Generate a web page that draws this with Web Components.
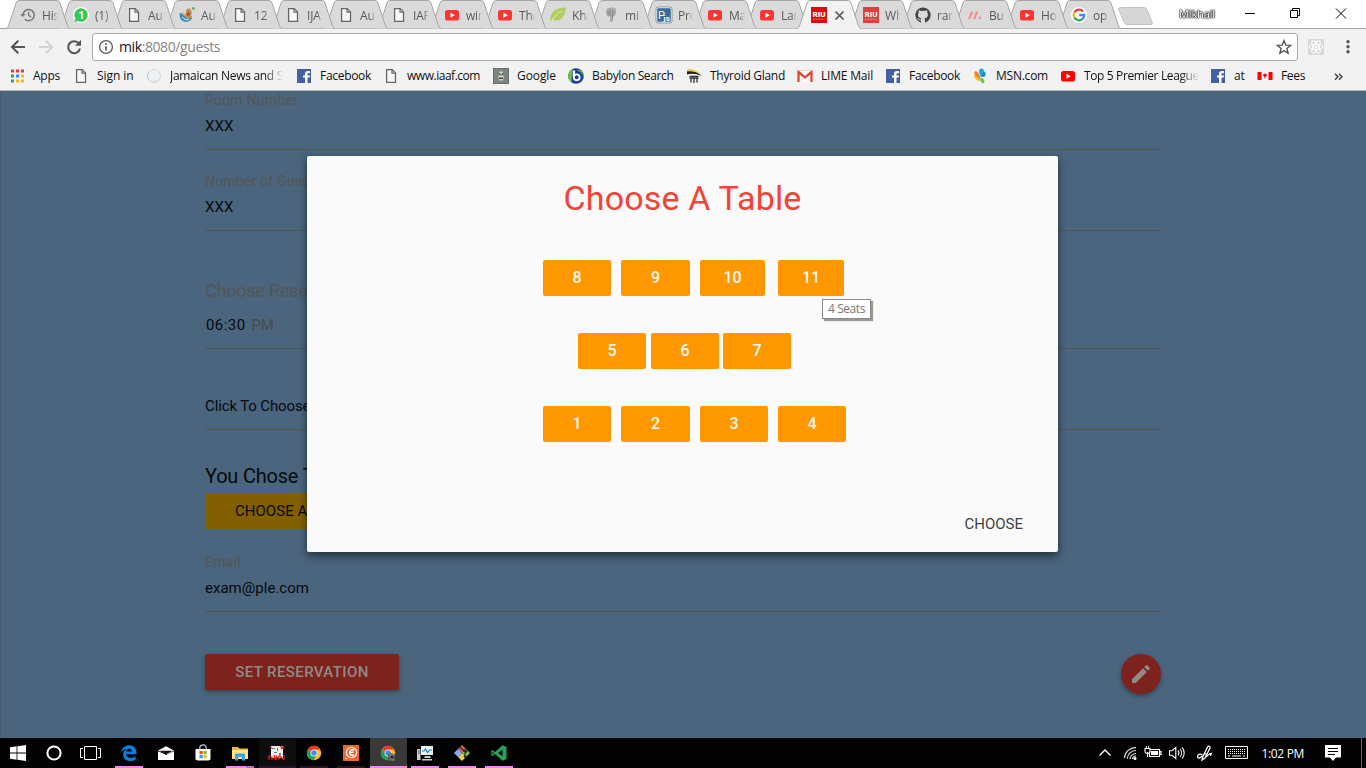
<!DOCTYPE html>
<html lang="en">
<head>
<meta charset="utf-8">
<title>Guests</title>
<style>
html,body{margin:0;height:768px;overflow:hidden;background:#000}
body{font-family:"Open Sans","Noto Sans",sans-serif}
</style>
</head>
<body>
<desktop-screen></desktop-screen>
<script>
const DOC='<path d="M3.6 1.6h5.6l3.3 3.3v9.5H3.6z" fill="#f8f8f8" stroke="#666" stroke-width="1.3"/><path d="M9 1.8v3.4h3.4" fill="none" stroke="#666" stroke-width="1.2"/>';
const YT=c=>`<rect x="1" y="3" width="14" height="10.6" rx="2.6" fill="${c}"/><path d="M6.5 5.8v5l4.2-2.5z" fill="#fff"/>`;
const FB='<rect x="1" y="1" width="14" height="14" fill="#4460a0"/><path d="M9 15V9.6H7V7.4h2V6c0-2 1-3 2.9-3H14v2.2h-1.4c-.9 0-1.1.4-1.1 1.1v1.1H14l-.3 2.2h-2.2V15z" fill="#fff"/>';
const RIU=o=>`<g opacity="${o}"><rect width="16" height="16" fill="#e00a0a"/><text x="1.6" y="9.6" font-family="Roboto" font-weight="900" font-size="7.4" textLength="13" lengthAdjust="spacingAndGlyphs" fill="#fff">RIU</text><path d="M2 12.2h12" stroke="#f59a9a" stroke-width=".8" stroke-dasharray="1 .5"/></g>`;
const CHROME='<circle cx="8" cy="8" r="7.2" fill="#fbc116"/><path d="M8 8 1.8 4.4A7.2 7.2 0 0 1 14.3 4.6L8 4.7z" fill="#e33b2e"/><path d="M8 8 1.8 4.4A7.2 7.2 0 0 0 7.6 15.2L10.8 9.6z" fill="#1da35a"/><circle cx="8" cy="8" r="3.5" fill="#f5f5f5"/><circle cx="8" cy="8" r="2.7" fill="#4488ee"/>';
const ICONS={
 history:'<path d="M3 8a5.6 5.6 0 1 1 1.8 4.2" fill="none" stroke="#777" stroke-width="1.5"/><path d="M.3 7h5.2L2.9 10z" fill="#777"/><path d="M8.6 4.8v3.6l2.6 1.6" fill="none" stroke="#777" stroke-width="1.3"/>',
 whats:'<circle cx="8" cy="8" r="8" fill="#fff"/><path d="M8 1.2a6.8 6.8 0 1 1-3 12.9L1.5 15l1-3.3A6.8 6.8 0 0 1 8 1.2z" fill="#34c759"/><text x="5.4" y="12" font-family="Roboto" font-weight="700" font-size="10.5" fill="#fff">1</text>',
 doc:DOC,
 play:'<path d="M7 4c1-3 4-3 5-1l1 3-1 2 1 2c-1 3-5 5-8 5 2-1 3-2 3-4L5 9c1-1 2-3 2-5z" fill="#c98a50"/><path d="M.5 6c3 0 4 2 6 4s4 2 7 0c-1 4-5 5.500-8.500 4.500S.5 10 .5 6z" fill="#3b8fb8"/><path d="M2 6l3-1 1 4z" fill="#e9b23c"/><path d="M9 4l2 4-3 1z" fill="#7a5038"/><path d="M3 10l4 3 3-1" fill="none" stroke="#d9e6ea"/><circle cx="14.4" cy="1.500" r="1.400" fill="#45bd67"/>',
 yt:YT('#ff3434'), ytr:YT('#ff0000'),
 leaf:'<path d="M.5 15C-1 5 5 1 16 .5 15.500 11 8 16 3 12.500z" fill="#b2cc60"/><path d="M1 15.500C4 9 8 6 12 4" fill="none" stroke="#e3ecc6" stroke-width="1"/>',
 pg:'<path d="M4 1.500c3-1.500 6-1.500 8.500 0 1.500 2 .5 6-1 7.500L10 9v5c-1 1.500-3 1.500-3-.5V9L5 10C3 7 2.500 4 4 1.500z" fill="#aaa"/><path d="M7 3v6M9.800 3v8M5 4v4" stroke="#777" stroke-width=".8" fill="none"/>',
 pjs:'<rect x=".7" y=".7" width="14.600" height="14.600" rx="1.800" fill="#396b94" stroke="#fff"/><rect width="16" height="16" rx="2" fill="none" stroke="#234" stroke-width=".4"/><text x="2" y="11.500" font-family="Roboto" font-size="11" fill="#fff">P</text><text x="7.600" y="14" font-family="Roboto" font-weight="700" font-size="8" fill="#fff">js</text>',
 riu:RIU(1), riuf:RIU(.75),
 github:'<path d="M8 .4a7.700 7.700 0 0 0-2.500 15c.4.1.5-.2.5-.4v-1.600c-2.100.5-2.600-.9-2.600-.9-.4-.9-.9-1.100-.9-1.100-.7-.5.1-.5.1-.5.8.1 1.200.8 1.200.8.7 1.200 1.800.9 2.200.7.100-.5.300-.9.500-1.100-1.700-.2-3.500-.9-3.500-3.800 0-.8.300-1.500.8-2.100-.1-.2-.4-1 .1-2.100 0 0 .6-.2 2.100.8a7 7 0 0 1 4 0c1.400-1 2.100-.8 2.100-.8.400 1.100.1 1.900 0 2.100.5.600.8 1.300.8 2.100 0 3-1.800 3.600-3.500 3.800.3.200.6.700.6 1.400v2.300c0 .2.100.5.500.4A7.700 7.700 0 0 0 8 .4z" fill="#444"/>',
 moqups:'<path d="M1 12 4 4.500h2.400L3.400 12zM6 12l3-7.500h2.400L8.500 12z" fill="#f68d90"/><circle cx="12.800" cy="10.800" r="1.400" fill="#f68d90"/>',
 google:'<circle cx="8" cy="8" r="8" fill="#fff"/><g fill="none" stroke-width="2.300"><path d="M12 4.400A5.300 5.300 0 0 0 3.400 5.400" stroke="#ea4335"/><path d="M3.400 5.400a5.300 5.300 0 0 0 0 5.200" stroke="#fbbc05"/><path d="M3.400 10.600a5.300 5.300 0 0 0 8 1.500" stroke="#34a853"/><path d="M11.400 12.100A5.300 5.300 0 0 0 13.200 8H8.200" stroke="#4285f4"/></g>',
 back:'<path d="M15 8H2.200M8.300 1.800 2 8l6.300 6.200" fill="none" stroke="#555" stroke-width="2"/>',
 fwd:'<path d="M1 8h12.800M7.700 1.800 14 8l-6.300 6.200" fill="none" stroke="#d2d2d2" stroke-width="2"/>',
 reload:'<path d="M13 4.600A6 6 0 1 0 14 9.500" fill="none" stroke="#555" stroke-width="2"/><path d="M15 .8v6H9z" fill="#555"/>',
 info:'<circle cx="8" cy="8" r="6.400" fill="none" stroke="#5a5a5a" stroke-width="1.300"/><path d="M8 7.200v4.400M8 4.200v1.700" stroke="#5a5a5a" stroke-width="1.700"/>',
 star:'<path d="m8 1.600 1.800 4.500 4.800.3-3.700 3.100 1.200 4.800L8 11.700l-4.100 2.600 1.200-4.800L1.400 6.400l4.800-.3z" fill="none" stroke="#555" stroke-width="1.400"/>',
 react:'<rect width="16" height="16" fill="#d8d8d8"/><g fill="none" stroke="#fff" stroke-width="1"><ellipse cx="8" cy="8" rx="6.800" ry="2.600"/><ellipse cx="8" cy="8" rx="6.800" ry="2.600" transform="rotate(60 8 8)"/><ellipse cx="8" cy="8" rx="6.800" ry="2.600" transform="rotate(120 8 8)"/></g><circle cx="8" cy="8" r="1.300" fill="#fff"/>',
 dots:'<circle cx="8" cy="2.700" r="1.700" fill="#555"/><circle cx="8" cy="7.700" r="1.700" fill="#555"/><circle cx="8" cy="12.700" r="1.700" fill="#555"/>',
 apps:'<g><path d="M2 1.500h3v3H2zM7 1.500h3v3H7zM12 1.500h3v3h-3z" fill="#e83b30"/><path d="M2 6.500h3v3H2z" fill="#2fa757"/><path d="M7 6.500h3v3H7z" fill="#2d8cf5"/><path d="M12 6.500h3v3h-3zM7 11.500h3v3H7zM12 11.500h3v3h-3z" fill="#fbb612"/><path d="M2 11.500h3v3H2z" fill="#2fa757"/></g>',
 globe:'<circle cx="8" cy="8" r="6.500" fill="#f0f1f3" stroke="#d5dae0" stroke-width="1"/><path d="M3 4a6 6 0 0 0 0 8" fill="none" stroke="#b7d4ea" stroke-width="1.300"/><path d="M5 12.500a6 6 0 0 0 7 0" fill="none" stroke="#e4ddc8"/>',
 fb:FB,
 robot:'<rect width="16" height="16" fill="#697069"/><rect x="1" y="1" width="14" height="14" fill="#7d837d"/><path d="M6 3.500h4v2.500H6zM5 7.500h6l-1 5H6z" fill="#c9d2bd"/><path d="M6 5h1.300v1H6zM9 5h1.300v1H9zM6 9.500h4v1.500H6z" fill="#444c44"/>',
 babylon:'<circle cx="8" cy="8" r="7.800" fill="#1d3ba5"/><path d="M1 5A7.800 7.800 0 0 0 4 14.800C3 10 4 6 5 .8A8 8 0 0 0 1 5z" fill="#6cc72e"/><path d="M12.500 1.800a8 8 0 0 1 2 10.500C16 7 14 4 8 2z" fill="#57b62a"/><path d="M6 2.500 5.800 9" stroke="#fff" stroke-width="2.300"/><circle cx="8.700" cy="9.300" r="2.900" fill="#1d3ba5" stroke="#fff" stroke-width="1.900"/>',
 thyroid:'<path d="M1 3C6 1.500 12 3.500 15.500 8 11 6 6 5 1 6.500z" fill="#222"/><path d="M1 1.500c5-1.800 10 .5 14 5C10 3.500 6 3 1 3.300z" fill="#f3cd45"/><path d="M3.500 8.300h9M5 10v4.500M8 10v5M11 10v4.500M3.500 10h9" stroke="#333" stroke-width="1.300"/>',
 gmail:'<path d="M.5 2.500h15v11.500H.5z" fill="#fff"/><path d="M1.500 14V4L8 9.500 14.500 4v10" fill="none" stroke="#e0453a" stroke-width="2.300"/><path d="M3 13.500 6.500 9M13 13.500 9.500 9M.5 2.500h15" stroke="#dcc" stroke-width=".8"/>',
 msn:'<path d="M9 9C6 4 6.500.5 9.500.5S13.500 5 10 9z" fill="#22a7e8"/><path d="M9.500 8.500c1-5 4-6 4-3s-1 4-4 3z" fill="#0f8fd0"/><path d="M8.500 12C3 9 1 5 3 3.500S8 7 9 12z" fill="#f58220"/><path d="M8 11.500C9 9 12 10 12.500 13.500 12 17 9 15 8 11.500z" fill="#7cc242"/><path d="M2 8c2-1 4 1 6 5-2 .5-4.500-1-6-5z" fill="#fdb913"/>',
 canada:'<path d="M.5 4h15v8H.5z" fill="#fff"/><path d="M.5 4h4v8h-4zM11.500 4h4v8h-4zM8 4.800l.8 1.500 1.500.2-.8 1.700-1 .7v1.700h-1V8.900l-1-.7-.8-1.700 1.500-.2z" fill="#f00"/>',
 win:'<path d="M0 2.300 6.600 1.300v6.300H0zM7.400 1.200 16 0v7.600H7.400zM0 8.400h6.600v6.300L0 13.700zM7.400 8.400H16V16l-8.600-1.200z" fill="#fff"/>',
 cortana:'<circle cx="8" cy="8" r="6.600" fill="none" stroke="#fff" stroke-width="2"/>',
 edge:'<path d="M.3 7.200C1 2.500 4.300.2 8.200.2c4.600 0 7.200 3.200 7.200 7.400v1.700H5.100c.1 2.600 2.300 3.500 4.600 3.500 1.900 0 3.500-.5 4.900-1.300v3.200c-1.500.8-3.400 1.300-5.500 1.300-4.300 0-7-2.400-7-6.200 0-2.600 1.500-4.700 3.600-5.800C3.700 4.300 1.600 5.300.3 7.200zM5.200 6.400h5.600c0-1.700-1-2.700-2.600-2.700-1.500 0-2.600 1-3 2.700z" fill="#0b7fe0"/>',
 mail:'<path d="M0 5.500 8 1.200l8 4.300L9.500 9z" fill="#fff"/><path d="M0 6.200 6.500 9 8 10l1.500-1L16 6.200V15H0z" fill="#fff"/><path d="M1.500 5.700h13L9.300 8.800 8 9.500 6 8z" fill="#111"/>',
 store:'<path d="M4.800 5V3a3.200 3.200 0 0 1 6.400 0v2" fill="none" stroke="#ccc" stroke-width="1.200"/><path d="M.5 4h15v10.500l-2 1h-11l-2-1z" fill="#fff"/><path d="M4.500 6h3.200v3.200H4.500z" fill="#f04e23"/><path d="M8.500 6h3.200v3.200H8.500z" fill="#7db928"/><path d="M4.500 10h3.200v3.200H4.500z" fill="#1ba1e8"/><path d="M8.500 10h3.200v3.200H8.500z" fill="#fcb813"/>',
 folder:'<path d="M0 2h6l1.500 1.500H16V14H0z" fill="#e9b84b"/><path d="M0 5h16v9H0z" fill="#ffe391"/><path d="M3 15.500V9.800C3 9 3.500 8.500 4.200 8.500h7.600c.7 0 1.200.5 1.200 1.300v5.700h-3v-3.500H6v3.500z" fill="#3da3dc"/>',
 game:'<path d="M2 1h12v12H2z" fill="#eee"/><path d="M3 3h3v1H3zM8 3h1v3H8zM5 7h3v1H5zM10 8h2v2h-2z" fill="#777"/><path d="M11 1l4 3M12 4l3-3M0 10v5M0 12h3v3M5 10l1 5M7 15v-4l3 3v-4M11 11l4 4M15 10v5M1 2l2 1" fill="none" stroke="#e31b1b" stroke-width="1.200"/>',
 chrome:CHROME,
 orange:'<path d="M0 0h16v16H0z" fill="#f1642c"/><circle cx="8.500" cy="7.500" r="5.200" fill="none" stroke="#fff" stroke-width="1.200"/><path d="M11 5.300a2.800 2.800 0 1 0 0 4.600M6.500 7.500 10.500 7.200" fill="none" stroke="#fff" stroke-width="1.400"/><path d="M2.500 13.500H4" stroke="#fff" stroke-width="1.200"/>',
 chrome2:CHROME+'<path d="M8 9h7v7H8z" fill="#555" opacity=".9"/><path d="M10 7l5 3-2 2 2 4-4-1-2-4z" fill="#777"/><circle cx="12" cy="12" r="1.500" fill="#252525"/>',
 monitor:'<path d="M4 1h12v9H4z" fill="#e8edf0"/><path d="M5 2h10v7H5z" fill="#e6f6ff"/><path d="M5 6h2l1.500-2 2 3.500L12.500 5H15" fill="none" stroke="#1c79bd" stroke-width="1.100"/><path d="M0 4h3.500v11H0zM8 11h5l1 2H7zM5 14h10v1.500H5z" fill="#c9cdd0"/><path d="M1 6h2M1 8h2" stroke="#555"/>',
 git:'<path d="M8 0l4 4-4 4-4-4z" fill="#ea5b60"/><path d="M4 4l4 4-4 4-4-4z" fill="#83aaf5"/><path d="M12 4l4 4-4 4-4-4z" fill="#85c558"/><path d="M8 8l4 4-4 4-4-4z" fill="#e9ca52"/><path d="M6 2l5 5v5M9 5h4" fill="none" stroke="#222" stroke-width="1.100"/><circle cx="11" cy="11.500" r="1.200" fill="#222"/><circle cx="12" cy="6.500" r="1.200" fill="#222"/>',
 vs:'<path d="M11.500.3 15.500 2v12l-4 1.700L4 8.900 1.500 11 .3 10.300V5.700L1.500 5 4 7.100zM11.500 4.800 7 8l4.500 3.300zM1.500 6.700v2.700L3 8z" fill="#22a45d" fill-rule="evenodd"/>',
 chev:'<path d="M2.500 10.500 8 5l5.500 5.500" fill="none" stroke="#fff" stroke-width="1.400"/>',
 wifi:'<g fill="none" stroke="#ddd" stroke-width="1.200"><path d="M2.500 13A11 11 0 0 1 14 2.600M5.300 13.800A8.500 8.500 0 0 1 14 5.500M8 14A6 6 0 0 1 14 8.500M10.500 14a3.500 3.500 0 0 1 3.500-3"/></g><circle cx="13" cy="13.500" r="1.500" fill="#fff"/>',
 batt:'<path d="M4.500 4.500h10v7h-10zM14.500 6.500H16v3h-1.500" fill="none" stroke="#fff" stroke-width="1.200"/><path d="M6 6h7v4H6z" fill="#fff"/><path d="M0 3.500h5v2.500a2.500 2.500 0 0 1-5 0zM2.500 7v5" fill="#000" stroke="#fff" stroke-width="1.100"/><path d="M1.300 1v2.500M3.700 1v2.500" stroke="#fff"/>',
 vol:'<path d="M.5 5.700H3L6.800 2.500v11L3 10.300H.5z" fill="none" stroke="#fff" stroke-width="1.100"/><path d="M9 5.700a3.500 3.500 0 0 1 0 4.600M11 4a6 6 0 0 1 0 8M13 2.300a8.500 8.500 0 0 1 0 11.400" fill="none" stroke="#fff" stroke-width="1.100"/>',
 pen:'<path d="M5.500 12.500 10.500 2c1-1.500 3-.5 2.500 1L8 13l-3 2zM5.500 9.500C1 8 0 11 .8 12.500s3.200 0 4.400-2M8.500 12c3-1 3-4 6.500-3.500-1 0-2 1-1 2.500M7.500 8.500l3 1.500" fill="none" stroke="#fff" stroke-width="1.300"/>',
 action:'<path d="M0 0h16v12.500h-5L8 16l-3-3.500H0z" fill="#fff"/><path d="M3 3.500h10M3 6.500h10M3 9.500h7" stroke="#000" stroke-width="1"/>',
 pencil:'<path d="M3 17.250V21h3.750L17.810 9.940l-3.750-3.750L3 17.250zM20.710 7.040c.39-.39.39-1.020 0-1.410l-2.340-2.340c-.39-.39-1.020-.39-1.410 0l-1.830 1.830 3.750 3.750 1.830-1.830z" fill="#918a87" transform="scale(.6667)"/>'
};
function define(name,css,html,after){
  const t=document.createElement('template');
  customElements.define(name,class extends HTMLElement{
    connectedCallback(){
      if(this.shadowRoot) return;
      t.innerHTML='<style>'+css+'</style>'+(typeof html==='function'?html(this):html);
      this.attachShadow({mode:'open'}).appendChild(t.content.cloneNode(true));
      if(after) after(this);
    }
  });
}
define('ui-icon',':host{display:block;flex:none;width:var(--s,16px);height:var(--s,16px)}svg{display:block;width:100%;height:100%;overflow:visible}',
  e=>`<svg viewBox="0 0 16 16">${ICONS[e.getAttribute('name')]}</svg>`);

/* Text run tracked so that it occupies the width given in w */
define('fit-text',':host{display:block;flex:none;white-space:nowrap}span{display:inline-block}','<span><slot></slot></span>',e=>{
  const w=+e.getAttribute('w'),s=e.shadowRoot.querySelector('span');
  if(w){const n=e.textContent.length;s.style.letterSpacing=((w-s.getBoundingClientRect().width)/n).toFixed(3)+'px';}
});

define('browser-tab',`:host{display:block;flex:none;position:relative;height:29px}
svg{position:absolute;left:0;top:0;overflow:visible}
.c{position:relative;display:flex;align-items:center;height:30px;padding-left:14px}
.t{margin-left:6px;width:16px;overflow:hidden;white-space:nowrap;font-size:12px;letter-spacing:-.2px;color:#5a5a5a;-webkit-mask-image:linear-gradient(90deg,#000 65%,transparent)}
svg.x{position:static;margin-left:8px}`,
 e=>{const a=e.hasAttribute('active');
  return `<svg width="65" height="29"><path d="M0 28.500C2 28 2 27 3 24.500L10 3Q11 .5 13 .5H51Q53 .5 54 3L61 24.500C62 27 62 28 64 28.500" fill="${a?'#f2f2f2':'#dadada'}" stroke="#a6a6a6"/>${a?'<path d="M1 28.500H63" stroke="#f2f2f2" stroke-width="1.400"/>':''}</svg>
  <div class="c"><ui-icon name="${e.getAttribute('icon')}"></ui-icon>${a?'<svg class="x" width="9" height="9"><path d="M.5.5l8 8M8.500.5l-8 8" stroke="#555" stroke-width="1.700"/></svg>':'<div class="t"><slot></slot></div>'}</div>`;});

const TABS=[['history','His'],['whats','(1)'],['doc','Au'],['play','Au'],['doc','12'],['doc','IJA'],['doc','Au'],['doc','IAF'],['yt','win'],['yt','The'],['leaf','Kha'],['pg','mi'],['pjs','Pro'],['yt','Ma'],['yt','Lar'],['riu',''],['riuf','Wh'],['github','rar'],['moqups','Bu'],['yt','Ho'],['google','op']];
define('tab-strip',`:host{display:flex;height:29px;box-sizing:border-box;background:#fff;padding-left:6px;box-shadow:inset 0 -1px #a6a6a6;position:relative}
.new{margin:7px 0 0 9px;flex:none}.user{margin:6px 0 0 25px;font-size:11px;line-height:16px;color:#fff;text-shadow:0 0 1px #000,0 0 1px #000,0 0 2px #000,0 0 2px #333;will-change:transform}
.ctl{margin:7px 0 0 29px;flex:none}`,
 ()=>TABS.map((t,i)=>`<browser-tab icon="${t[0]}" ${i==15?'active':''} style="width:${i<12?53:i==12?51:52}px;z-index:${i==15?50:30-i}">${t[1]}</browser-tab>`).join('')+
 `<svg class="new" width="36" height="18"><path d="M3 .5H26Q28 .5 29 2.500L34 15Q35 17.500 33 17.500H9Q7 17.500 6 15L1 3Q0 .5 3 .5z" fill="#d6d6d6" stroke="#c2c2c2"/></svg>
 <fit-text class="user" w="36">Mikhail</fit-text>
 <svg class="ctl" width="103" height="13"><g fill="none" stroke="#000"><path d="M1 6.500h10M46.500 3.500h7v7h-7zM48.500 3.500v-2h7v7h-2M92 1.500l10 10M102 1.500l-10 10"/></g></svg>`);

define('address-bar',`:host{display:flex;align-items:center;height:32px;padding:2px 0 0 10px;box-sizing:border-box;background:#f2f2f2}
ui-icon{margin-right:12px}
.o{width:1206px;height:28px;box-sizing:border-box;border:1px solid #a9a9a9;border-radius:3px;background:#fff;display:flex;align-items:center;padding:0 5px;margin-left:-2px;margin-top:1px;flex:none}
.o ui-icon{margin:0 5px 0 0}.u{font-size:14px;color:#848484}.u b{font-weight:400;color:#111}.sp{flex:1}.o ui-icon.st{margin:0}.r{margin:1px 16px 0 10px}.m{margin:1px 0 0}.nav{margin-top:1px}`,
`<ui-icon class="nav" name="back"></ui-icon><ui-icon class="nav" name="fwd"></ui-icon><ui-icon class="nav" name="reload"></ui-icon>
<div class="o"><ui-icon name="info"></ui-icon><fit-text class="u" w="101"><b>mik</b>:8080/guests</fit-text><div class="sp"></div><ui-icon class="st" name="star"></ui-icon></div>
<ui-icon class="r" name="react"></ui-icon><ui-icon class="m" name="dots"></ui-icon>`);

/* icon, label, label width, item width, label fades out */
const MARKS=[['apps','Apps',27,64],['doc','Sign in',36.500,73],['globe','Jamaican News and S',113,150,1],['fb','Facebook',51,87],['doc','www.iaaf.com',73,110],['robot','Google',39,75],['babylon','Babylon Search',81.500,118],['thyroid','Thyroid Gland',75,111],['gmail','LIME Mail',52,88],['fb','Facebook',51,87],['msn','MSN.com',52,88],['ytr','Top 5 Premier League',115,150,1],['fb','at',10.500,47],['canada','Fees',24,77]];
define('bookmark-item',`:host{display:flex;align-items:center;flex:none;font-size:12px;color:#111}.l{margin-left:8px}
:host([fade]) .l{-webkit-mask-image:linear-gradient(90deg,#000 84%,transparent)}`,
 e=>`<ui-icon name="${e.getAttribute('icon')}"></ui-icon><div class="l"><fit-text w="${e.getAttribute('w')}">${e.textContent}</fit-text></div>`);
define('bookmark-bar',`:host{display:flex;height:30px;box-sizing:border-box;background:#f2f2f2;border-bottom:1px solid #b4b4b4;padding-left:9px}
bookmark-item{height:29px}svg{margin:12px 0 0}`,
 ()=>MARKS.map(m=>`<bookmark-item icon="${m[0]}" w="${m[2]}" ${m[4]?'fade':''} style="width:${m[3]}px">${m[1]}</bookmark-item>`).join('')+
 '<svg width="9" height="8"><path d="M1 .7 4 3.700 1 6.700M5 .7 8 3.700 5 6.700" fill="none" stroke="#444" stroke-width="1.500"/></svg>');

define('form-field',`:host{display:block;box-sizing:border-box;border-bottom:1px solid #555455;color:#060a0e;font-size:15px}
.l{height:20px;line-height:20px;font-size:14px;color:#545556}.v{height:20px;line-height:20px;margin:6px 0 13px}
:host(:not([label])) .v{margin-top:0}
:host([big]) .l{font-size:18px;height:24px;line-height:24px}:host([big]) .v{margin:12px 0 13px;padding-left:1px}`,
 e=>`${e.hasAttribute('label')?`<div class="l"><fit-text w="${e.getAttribute('lw')}">${e.getAttribute('label')}</fit-text></div>`:''}<div class="v"><slot></slot></div>`);
define('raised-button',`:host{display:flex;align-items:center;justify-content:center;box-sizing:border-box;height:36px;border-radius:2px;flex:none;font:500 15px/36px Roboto,sans-serif;background:var(--bg);color:var(--fg,#fff)}`,'<slot></slot>');

define('guest-page',`:host{display:block;height:647px;background:#4a657d;box-shadow:inset 1px 0 #425b72;position:relative;overflow:hidden;font-family:Roboto,sans-serif}
.f{width:956px;margin-left:205px}
form-field{width:956px}.you{font-size:20px;line-height:24px;margin-top:34px;color:#060a0e}
.row{display:flex;justify-content:space-between;margin-top:42px}
.fab{width:40px;height:40px;border-radius:50%;background:#7d221d;display:flex;align-items:center;justify-content:center;box-shadow:0 2px 4px rgba(0,0,0,.35);--s:24px}
.dlg{position:absolute;left:307px;top:65px}
.tip{position:absolute;left:822px;top:208px;box-sizing:border-box;width:49px;height:20px;border:1px solid #888;background:#fff;box-shadow:2px 2px 1px #999;font:12px/18px "Open Sans",sans-serif;color:#777;padding-left:5px}`,
`<div class="f">
<form-field label="Room Number" lw="93" style="margin-top:-1px"><fit-text w="28.500">XXX</fit-text></form-field>
<form-field label="Number of Guests" lw="117" style="margin-top:21px"><fit-text w="28.500">XXX</fit-text></form-field>
<form-field big label="Choose Reservation Time" lw="200" style="margin-top:48px"><div style="display:flex;gap:6px"><fit-text w="39.500">06:30</fit-text><fit-text w="22" style="color:#4a4c4e">PM</fit-text></div></form-field>
<form-field style="margin-top:47px;padding-top:.1px"><fit-text w="178">Click To Choose Your Table</fit-text></form-field>
<div class="you"><fit-text w="145">You Chose Table</fit-text></div>
<raised-button style="--bg:#826000;--fg:#080600;width:180px;margin-top:5px;font-weight:400;margin-bottom:23px"><fit-text w="120">CHOOSE A TABLE</fit-text></raised-button>
<form-field label="Email" lw="36"><fit-text w="104">exam@ple.com</fit-text></form-field>
<div class="row"><raised-button style="--bg:#7d221d;--fg:#918a87;width:194px;box-shadow:0 2px 4px rgba(0,0,0,.35)"><fit-text w="133.500">SET RESERVATION</fit-text></raised-button>
<div class="fab"><ui-icon name="pencil"></ui-icon></div></div>
</div>
<table-dialog class="dlg"></table-dialog><div class="tip"><fit-text w="37">4 Seats</fit-text></div>`);

const ROWS=[[236,[[8,68,10],[9,69,10],[10,65,13],[11,66,0]]],[271,[[5,68,5],[6,68,4],[7,68,0]]],[236,[[1,68,10],[2,69,10],[3,68,10],[4,68,0]]]];
define('table-dialog',`:host{display:flex;flex-direction:column;box-sizing:border-box;width:751px;height:396px;border-radius:2px;background:#fafafa;box-shadow:0 5px 10px rgba(0,0,0,.35),0 2px 6px rgba(0,0,0,.25)}
.h{display:flex;justify-content:center;font-size:34px;line-height:40px;margin:22px 0 42px;color:#f44336}
.r{display:flex;margin-bottom:37px}raised-button{--bg:#ff9800;--fg:#fff8ee;font-size:16px}
.c{align-self:flex-end;margin:35px 35px 0 0;font-size:15px;line-height:20px;color:#424242}`,
 ()=>`<div class="h"><fit-text w="238">Choose A Table</fit-text></div>`+ROWS.map(r=>`<div class="r" style="padding-left:${r[0]}px">${r[1].map(b=>`<raised-button style="width:${b[1]}px;margin-right:${b[2]}px">${b[0]}</raised-button>`).join('')}</div>`).join('')+
 '<div class="c"><fit-text w="58.500">CHOOSE</fit-text></div>');

define('task-item',`:host{display:flex;flex:none;width:37px;height:30px;align-items:center;justify-content:center;position:relative;--s:16px}
i{position:absolute;bottom:0;left:50%;height:2px;width:28px;margin-left:-14px;background:var(--u,transparent)}
:host([on]){background:#3a3937}:host([on]) i,:host([dim]) i{width:100%;left:0;margin:0}:host([dim]){background:#0d0d0d}`,
 e=>`<ui-icon name="${e.getAttribute('icon')}"></ui-icon><i></i>`);
define('task-bar',`:host{display:flex;height:30px;background:#020202;color:#fff}
.tv{display:flex;width:37.500px;align-items:center;justify-content:center}
.sp{flex:1}.g{display:flex;align-items:center}.g>*{flex:none}`,
()=>`<task-item icon="win" style="width:36px"></task-item><task-item icon="cortana" style="width:36px"></task-item>
<div class="tv"><svg width="21" height="16"><g fill="none" stroke="#fff"><path d="M4.500 1.500h12v13h-12zM3 3.500H.5v9H3M18 3.500h2.500v9H18"/></g></svg></div>`+
[['edge','#ff82f5'],['mail'],['store'],['folder','linear-gradient(90deg,#ff82f5 20px,#c465bd 20px)'],['game','#2a1428','dim'],['chrome','#2a1428'],['orange','#2a1428'],['chrome2','#ff82f5','on'],['monitor','#ff82f5'],['git','#ff82f5'],['vs','#ff82f5']].map((t,i)=>`<task-item icon="${t[0]}" ${t[2]||''} style="${i?'':'margin-left:1px;'}${t[1]?'--u:'+t[1]:''}"></task-item>`).join('')+
`<div class="sp"></div><div class="g"><ui-icon name="chev" style="margin-right:9px"></ui-icon><ui-icon name="wifi" style="margin-right:7px"></ui-icon><ui-icon name="batt" style="margin-right:8px"></ui-icon><ui-icon name="vol" style="margin-right:12px"></ui-icon><ui-icon name="pen" style="margin-right:12px"></ui-icon>
<svg width="23" height="14" style="margin-right:14px"><path d="M.5.500h22v12H.5z" fill="none" stroke="#fff"/><path d="M3 3.500h17M3 5.500h17M3 7.500h17" stroke="#fff" stroke-dasharray="1 1"/><path d="M3 10h2M7 10h9M18 10h2" stroke="#fff"/></svg>
<fit-text w="42.500" style="font-size:12px;margin-right:21px">1:02 PM</fit-text><ui-icon name="action" style="margin-right:20px"></ui-icon><svg width="5" height="30"><path d="M.5 0v30" stroke="#666"/></svg></div>`);

define('desktop-screen',':host{display:flex;flex-direction:column;width:1366px;height:768px;overflow:hidden}',
'<tab-strip></tab-strip><address-bar></address-bar><bookmark-bar></bookmark-bar><guest-page></guest-page><task-bar></task-bar>');
</script>
</body>
</html>
